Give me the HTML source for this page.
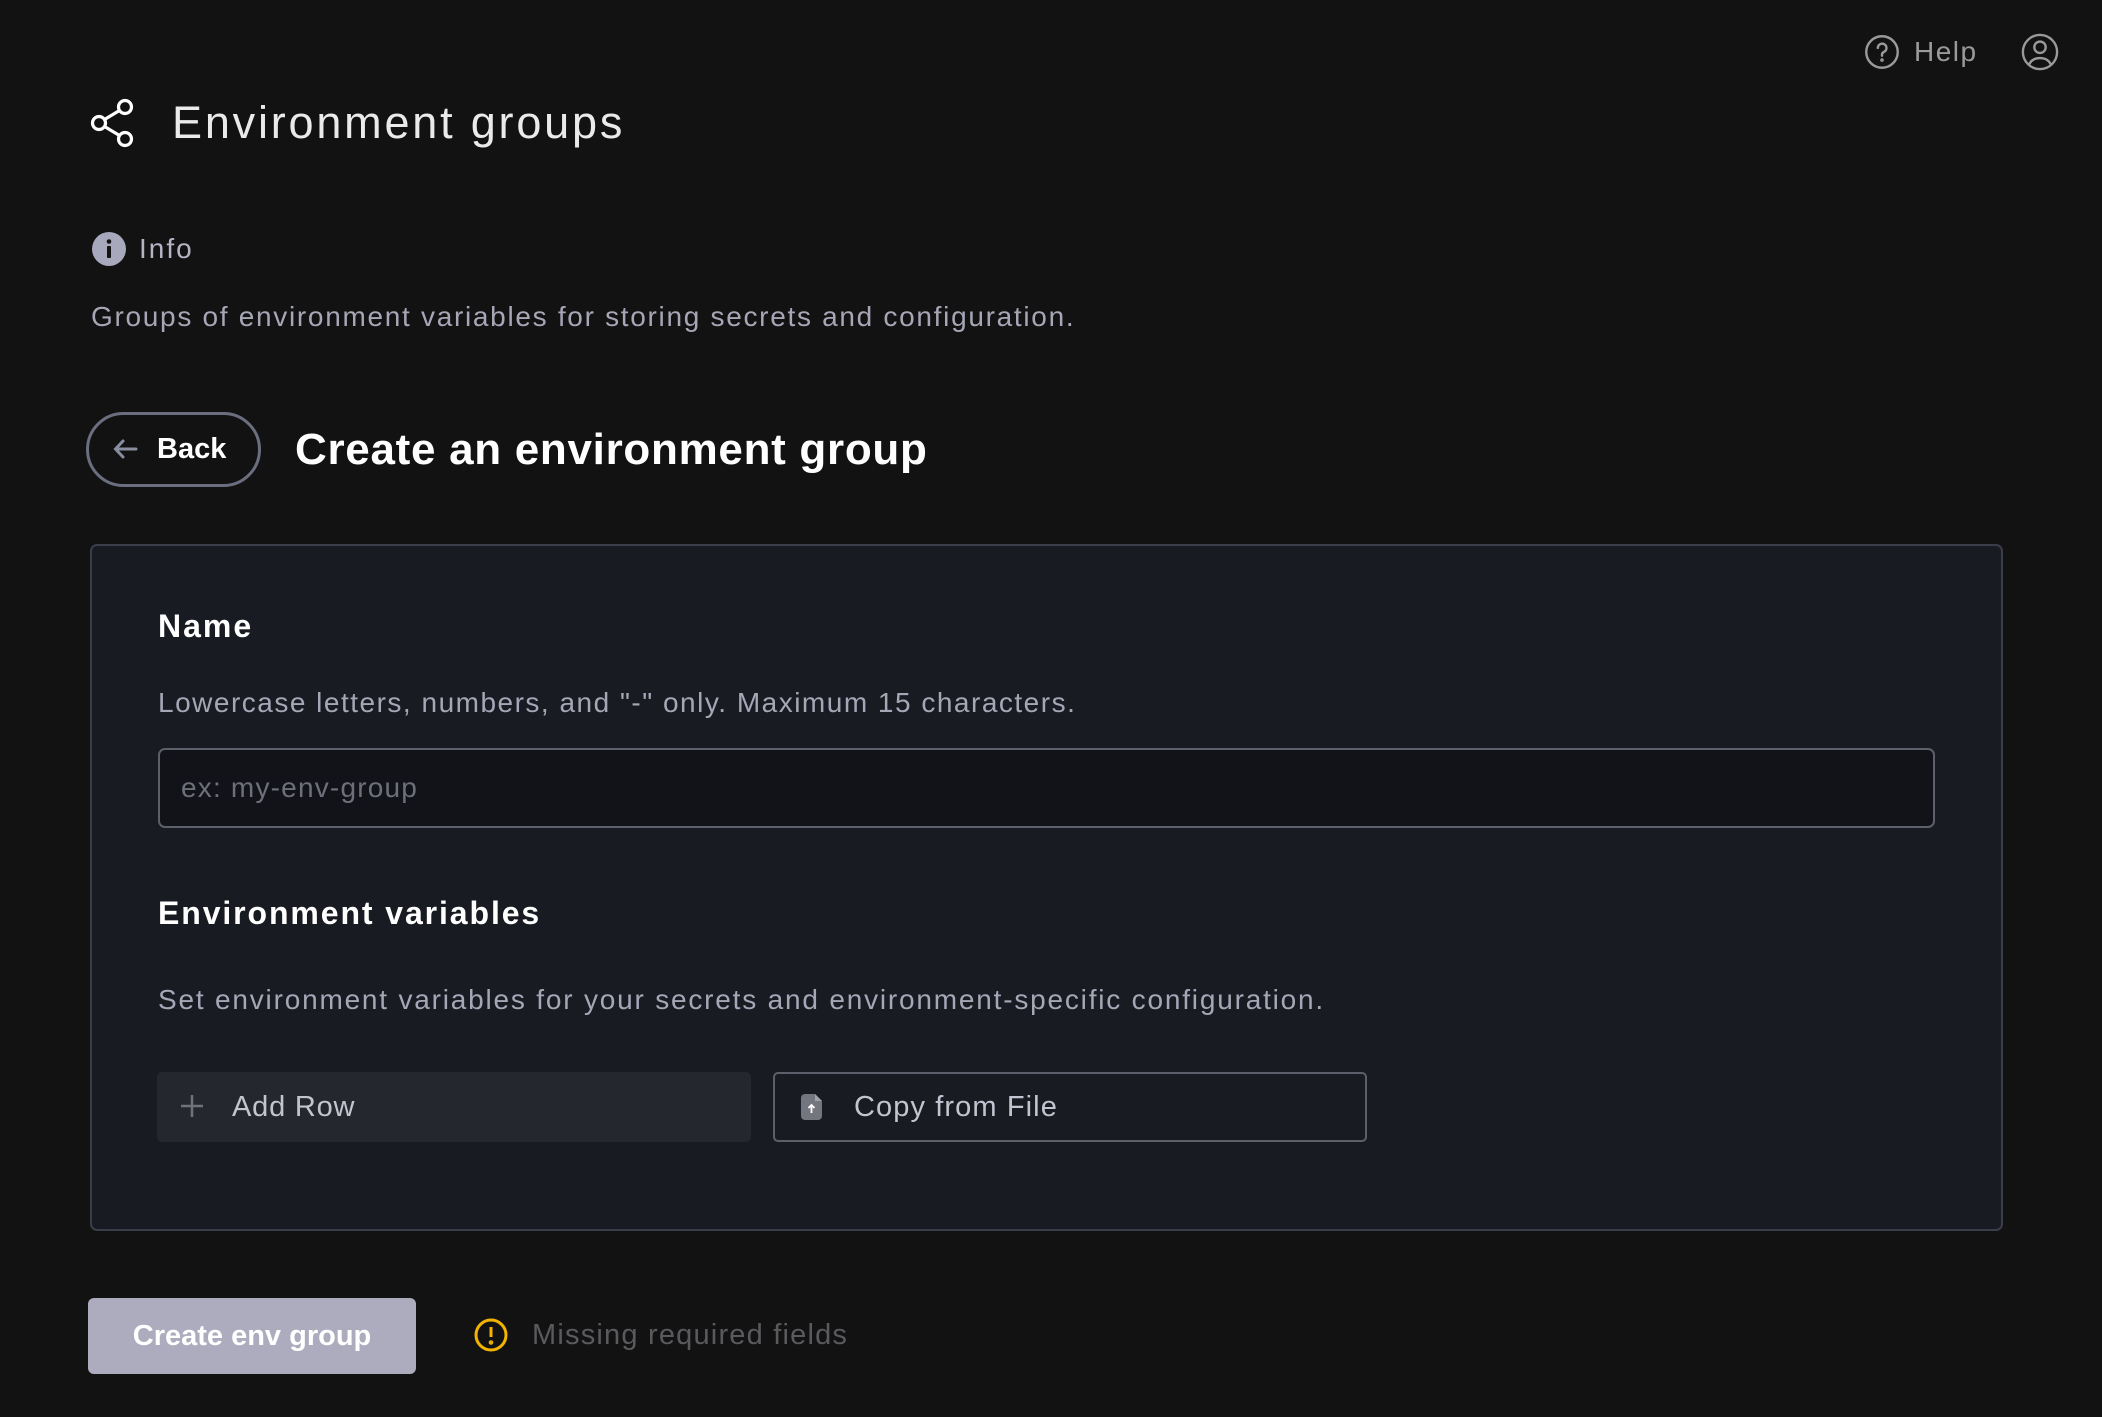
<!DOCTYPE html>
<html><head><meta charset="utf-8"><style>
*{margin:0;padding:0;box-sizing:border-box}
body{width:2102px;height:1417px;background:#121212;font-family:"Liberation Sans",sans-serif;position:relative;overflow:hidden;color:#fff}
.a{position:absolute;white-space:nowrap}
</style></head><body>
<svg class="a" style="left:1864px;top:34px" width="36" height="36" viewBox="0 0 24 24" fill="none" stroke="#9a9a9a" stroke-width="1.6" stroke-linecap="round"><circle cx="12" cy="12" r="10.5"/><path d="M9.2 9.3a2.9 2.9 0 1 1 4 2.7c-.8.4-1.2 1-1.2 1.8v.7"/><circle cx="12" cy="17.4" r=".4" fill="#9a9a9a"/></svg>
<div class="a" style="left:1914px;top:34px;font-size:28px;color:#9a9a9a;line-height:36px;letter-spacing:1.5px">Help</div>
<svg class="a" style="left:2021px;top:33px" width="38" height="38" viewBox="0 0 24 24" fill="none" stroke="#9a9a9a" stroke-width="1.5"><circle cx="12" cy="12" r="10.8"/><circle cx="12" cy="9" r="3.6"/><path d="M5.2 19.8c1.2-2.6 3.6-4 6.8-4s5.6 1.4 6.8 4"/></svg>

<svg class="a" style="left:90px;top:97px" width="46" height="52" viewBox="0 0 46 52" fill="none" stroke="#fff" stroke-width="3.2"><circle cx="35" cy="10" r="6.5"/><circle cx="9" cy="26" r="6.5"/><circle cx="35" cy="42" r="6.5"/><path d="M14.5 22.5 29.5 13.5M14.5 29.5 29.5 38.5"/></svg>
<div class="a" style="left:172px;top:96px;font-size:45px;color:#eaeaea;line-height:54px;letter-spacing:2.8px">Environment groups</div>

<svg class="a" style="left:92px;top:232px" width="34" height="34" viewBox="0 0 34 34"><circle cx="17" cy="17" r="17" fill="#a8a8bc"/><rect x="15" y="14" width="4" height="12" rx="1" fill="#121212"/><circle cx="17" cy="9.5" r="2.3" fill="#121212"/></svg>
<div class="a" style="left:139px;top:232px;font-size:28px;color:#b4b4c4;line-height:34px;letter-spacing:2px">Info</div>
<div class="a" style="left:91px;top:300px;font-size:28px;color:#a6a6b6;line-height:34px;letter-spacing:1.7px">Groups of environment variables for storing secrets and configuration.</div>

<div class="a" style="left:86px;top:412px;width:175px;height:75px;border:3px solid #6b6e7e;border-radius:38px"></div>
<svg class="a" style="left:112px;top:437px" width="28" height="24" viewBox="0 0 28 24" fill="none" stroke="#8a8da0" stroke-width="3" stroke-linecap="round"><path d="M4 12h20M11 4 3.5 12 11 20"/></svg>
<div class="a" style="left:157px;top:431px;font-size:29px;font-weight:bold;color:#fff;line-height:36px">Back</div>
<div class="a" style="left:295px;top:423px;font-size:44px;font-weight:bold;color:#fff;line-height:54px;letter-spacing:0.7px">Create an environment group</div>

<div class="a" style="left:90px;top:544px;width:1913px;height:687px;background:#191b23;border:2px solid #3b3e48;border-radius:7px"></div>
<div class="a" style="left:158px;top:606px;font-size:32px;font-weight:bold;color:#fff;line-height:40px;letter-spacing:2px">Name</div>
<div class="a" style="left:158px;top:686px;font-size:28px;color:#a6a6b6;line-height:34px;letter-spacing:1.5px">Lowercase letters, numbers, and "-" only. Maximum 15 characters.</div>
<div class="a" style="left:158px;top:748px;width:1777px;height:80px;border:2px solid #5d606b;border-radius:7px;background:#121319"></div>
<div class="a" style="left:181px;top:771px;font-size:28px;color:#6d707b;line-height:34px;letter-spacing:1.2px">ex: my-env-group</div>
<div class="a" style="left:158px;top:893px;font-size:32px;font-weight:bold;color:#fff;line-height:40px;letter-spacing:1.9px">Environment variables</div>
<div class="a" style="left:158px;top:983px;font-size:28px;color:#a6a6b6;line-height:34px;letter-spacing:1.8px">Set environment variables for your secrets and environment-specific configuration.</div>

<div class="a" style="left:157px;top:1072px;width:594px;height:70px;background:#25272e;border-radius:5px"></div>
<svg class="a" style="left:180px;top:1094px" width="24" height="24" viewBox="0 0 24 24" stroke="#6f727c" stroke-width="2.5"><path d="M12 1v22M1 12h22"/></svg>
<div class="a" style="left:232px;top:1090px;font-size:29px;color:#c4c4d0;line-height:34px;letter-spacing:0.8px">Add Row</div>

<div class="a" style="left:773px;top:1072px;width:594px;height:70px;border:2px solid #5d606b;border-radius:5px"></div>
<svg class="a" style="left:801px;top:1093px" width="22" height="28" viewBox="0 0 22 28"><path d="M4 1h10l7 7v15a4 4 0 0 1-4 4H4a4 4 0 0 1-4-4V5a4 4 0 0 1 4-4z" fill="#74767f"/><path d="M14 1v7h7" fill="#a0a2aa"/><path d="M10.5 20v-8M7.5 15l3-3 3 3" stroke="#fff" stroke-width="1.8" fill="none"/></svg>
<div class="a" style="left:854px;top:1090px;font-size:29px;color:#c4c4d0;line-height:34px;letter-spacing:1.1px">Copy from File</div>

<div class="a" style="left:88px;top:1298px;width:328px;height:76px;background:#acacbe;border-radius:6px;color:#fff;font-weight:bold;font-size:29px;line-height:76px;text-align:center">Create env group</div>
<svg class="a" style="left:474px;top:1318px" width="34" height="34" viewBox="0 0 34 34" fill="none" stroke="#f2b400" stroke-width="3"><circle cx="17" cy="17" r="15"/><path d="M17 9v10"/><circle cx="17" cy="24.5" r=".8" fill="#f2b400"/></svg>
<div class="a" style="left:532px;top:1318px;font-size:29px;color:#5a5a5e;line-height:34px;letter-spacing:1.2px">Missing required fields</div>
</body></html>
